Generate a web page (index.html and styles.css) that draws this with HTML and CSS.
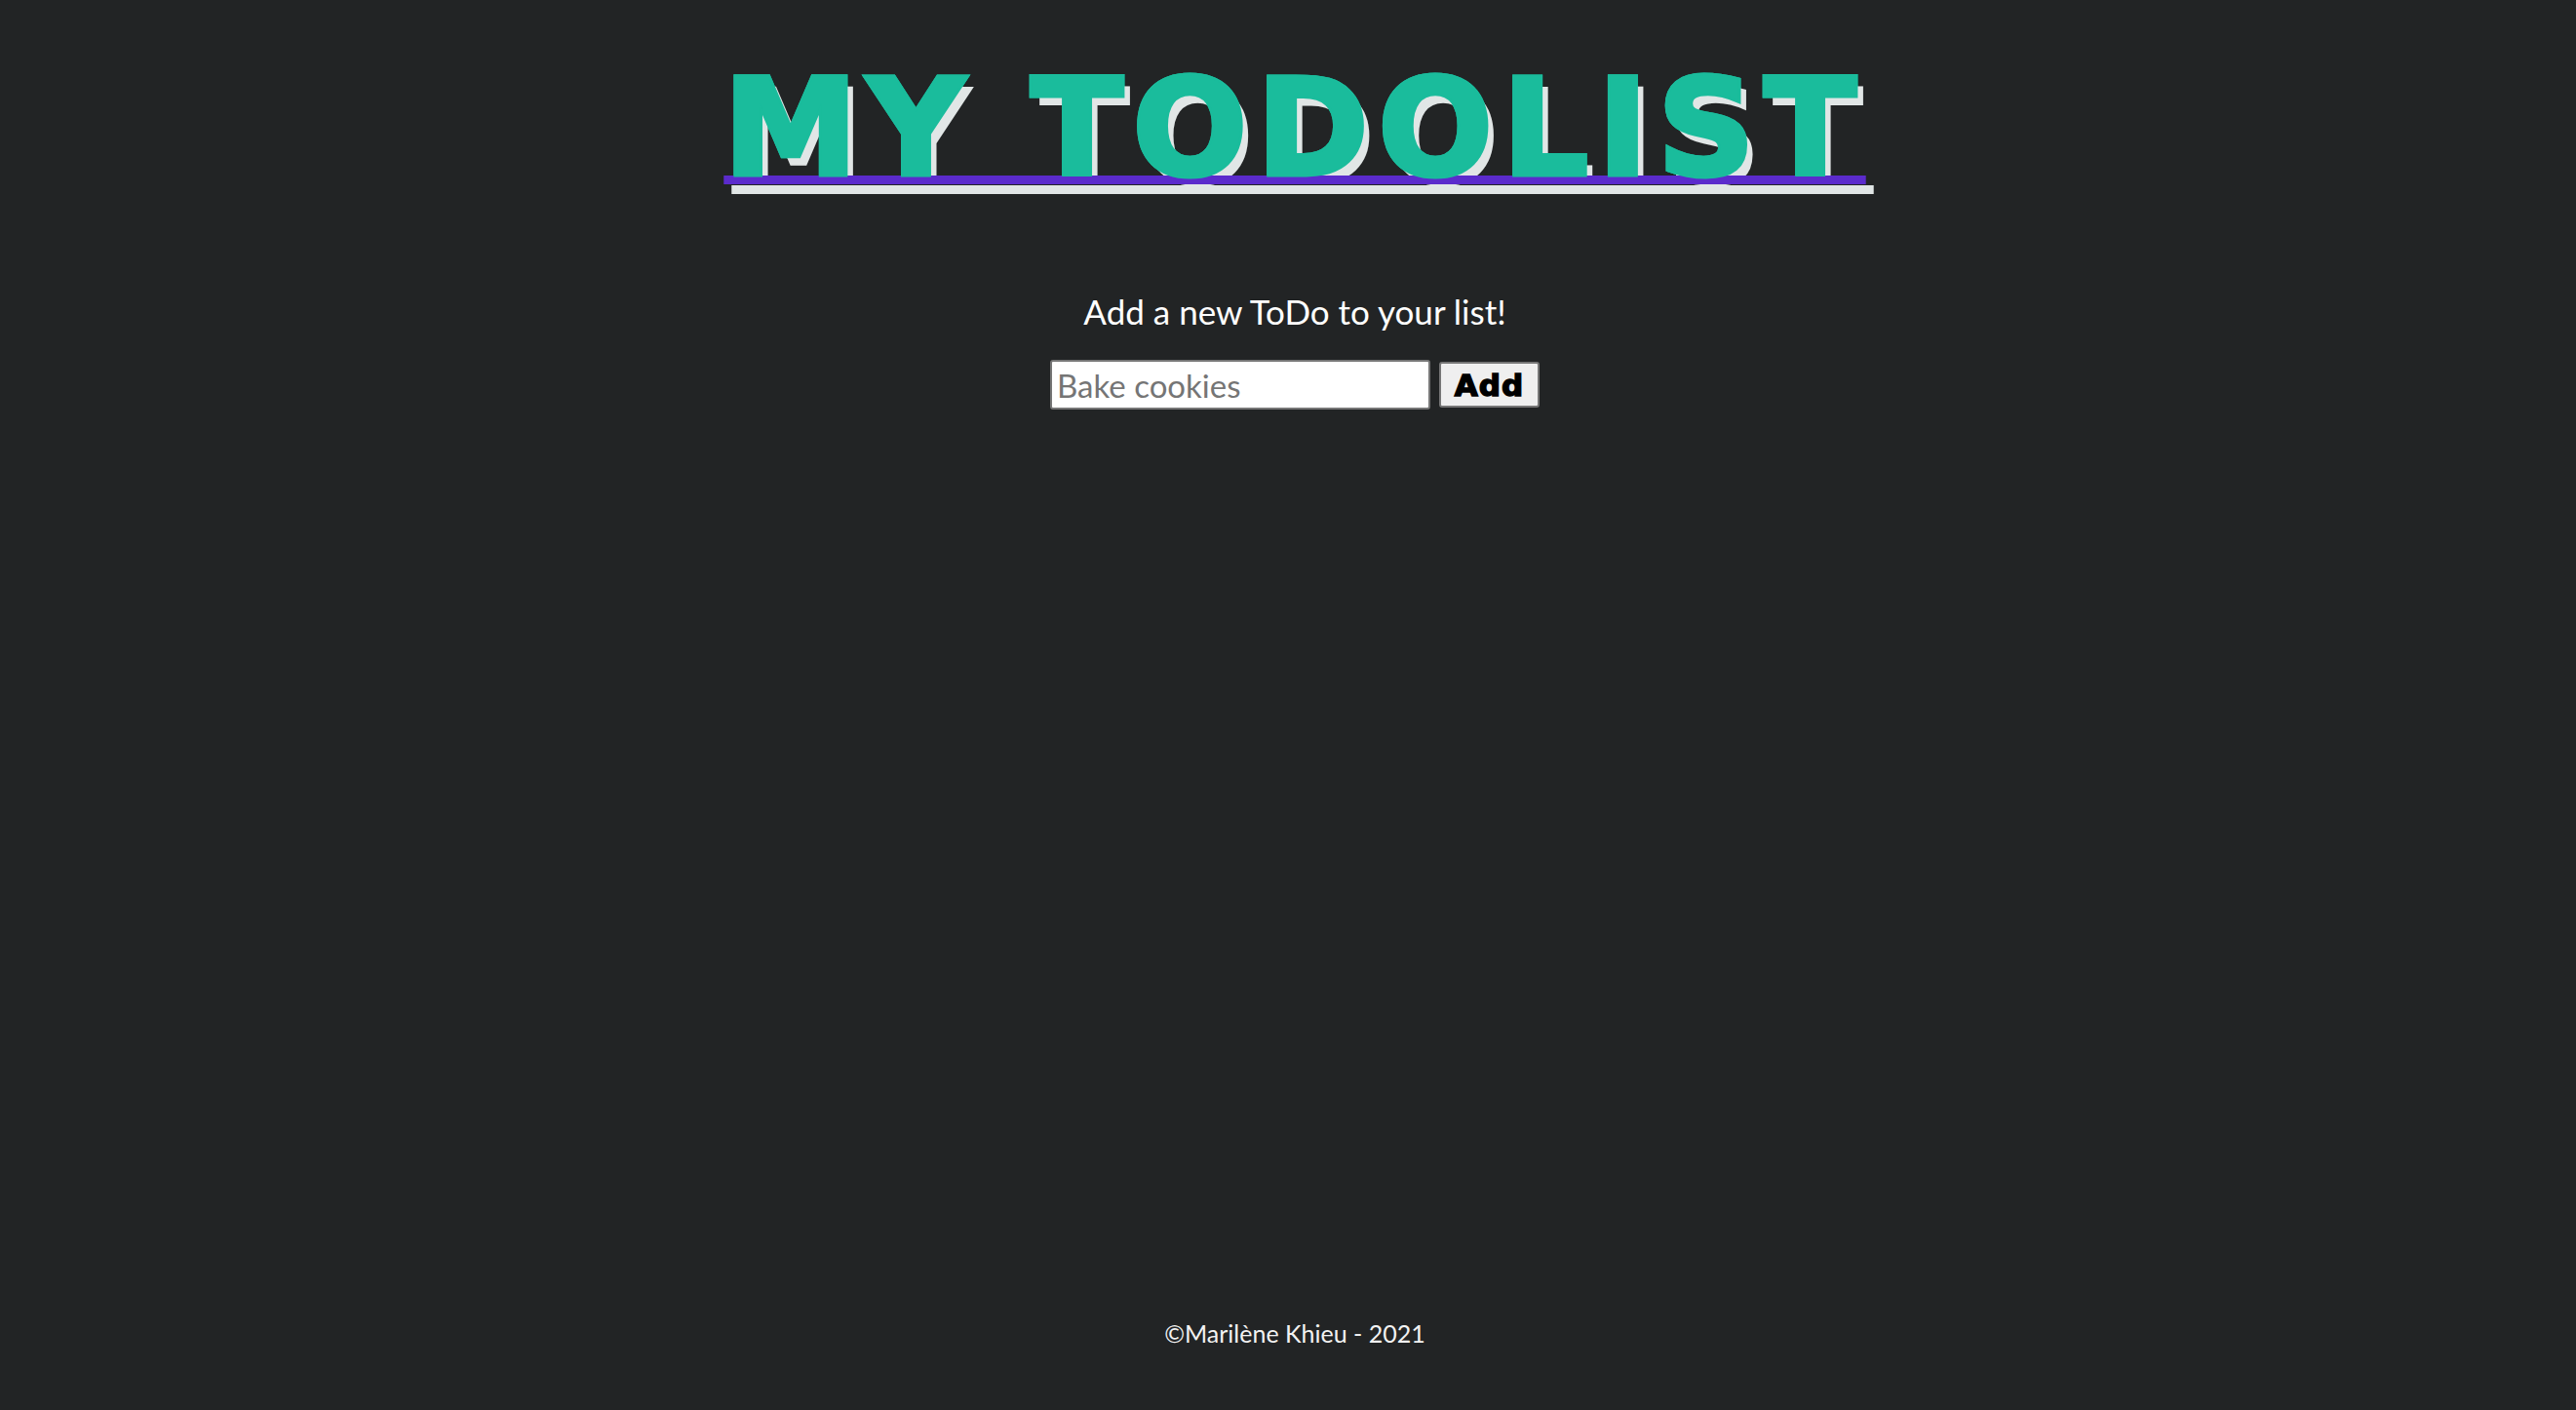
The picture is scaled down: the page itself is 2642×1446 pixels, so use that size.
FILE: index.html
```html
<!DOCTYPE html>
<html lang="en">
<head>
<meta charset="utf-8">
<title>My Todolist</title>
<link rel="stylesheet" href="styles.css">
</head>
<body>
<header class="header">
  <h1 class="title">MY TODOLIST</h1>
</header>
<main class="main">
  <p class="intro">Add a new ToDo to your list!</p>
  <form class="add-form">
    <input class="add-input" type="text" placeholder="Bake cookies">
    <button class="add-button" type="button">Add</button>
  </form>
</main>
<footer class="footer">©Marilène Khieu - 2021</footer>
</body>
</html>
```
FILE: styles.css
```css
html, body {
  margin: 0;
  padding: 0;
}
body {
  box-sizing: border-box;
  background: #222425;
  color: #ffffff;
  font-family: Lato, "Liberation Sans", sans-serif;
  min-height: 100vh;
  padding-left: 14px;
  display: flex;
  flex-direction: column;
  align-items: center;
}
.header {
  display: flex;
  justify-content: center;
  padding-top: 52px;
}
.title {
  margin: 0;
  font-family: "DejaVu Sans", "Liberation Sans", sans-serif;
  font-weight: 700;
  font-size: 138px;
  line-height: 160px;
  letter-spacing: 10px;
  color: #1abc9c;
  -webkit-text-stroke: 5px #1abc9c;
  paint-order: stroke fill;
  text-decoration: underline;
  text-decoration-color: #5b2bcc;
  text-decoration-thickness: 9px;
  text-underline-offset: 1px;
  text-decoration-skip-ink: none;
  text-shadow: 8px 10px 0 #e1e6e6;
}
.main {
  display: flex;
  flex-direction: column;
  align-items: center;
  margin-top: 85px;
}
.intro {
  margin: 0;
  font-size: 35px;
  line-height: 44px;
}
.add-form {
  margin-top: 28px;
  display: flex;
  align-items: center;
  gap: 9px;
}
.add-input {
  width: 390px;
  height: 51px;
  box-sizing: border-box;
  border: 2px solid #767676;
  border-radius: 3px;
  padding: 0 5px;
  font-family: Lato, sans-serif;
  font-size: 33px;
  color: #000;
  background: #fff;
}
.add-input::placeholder {
  color: #757575;
}
.add-button {
  width: 103px;
  height: 47px;
  box-sizing: border-box;
  background: #efefef;
  border: 2px solid #767676;
  border-radius: 3px;
  font-family: "DejaVu Sans", "Liberation Sans", sans-serif;
  font-weight: 700;
  font-size: 31px;
  -webkit-text-stroke: 1.5px #000;
  letter-spacing: 1px;
  color: #000;
  padding: 0;
}
.footer {
  margin-top: auto;
  padding-bottom: 64px;
  font-size: 25px;
  color: #f2f2f2;
}
```
